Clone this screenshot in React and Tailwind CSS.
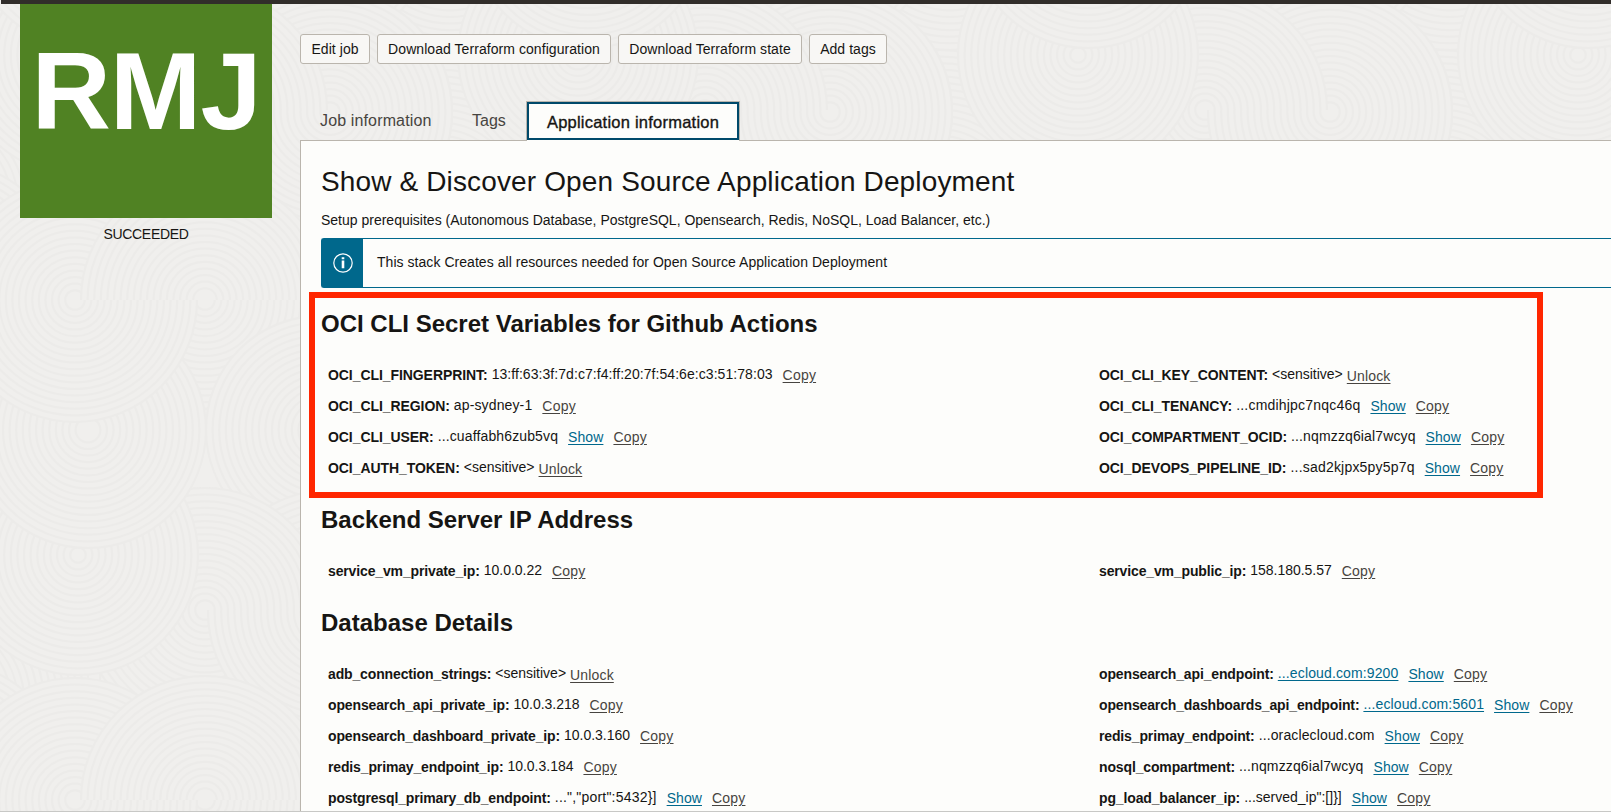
import React from 'react';

const rings = (step, max) => Array.from({ length: Math.floor(max / step) }, (_, i) => max - i * step);

/* Swirls of the repeating 500px tile, painted back to front: x, y, radius, upper half only. */
const discs = [
  [400, 260, 180], [250, 180, 150], [440, 200, 150],
  [205, 300, 122], [330, 112, 122], [205, 110, 122],
  [440, 290, 130], [450, 430, 120], [320, 430, 114], [330, 112, 122],
  [205, 110, 122, true], [78, 55, 120], [88, 430, 118],
  [75, 300, 122], [205, 300, 124, true],
];

const shape = (x, y, r, upper) =>
  upper
    ? `M${x - r} ${y}a${r} ${r} 0 0 1 ${2 * r} 0`
    : `M${x - r} ${y}a${r} ${r} 0 0 1 ${2 * r} 0a${r} ${r} 0 0 1 ${-2 * r} 0`;

function Backdrop() {
  return (
    <svg className="absolute inset-0 h-full w-full" aria-hidden="true">
      <defs>
        <pattern id="swirl" width="500" height="500" patternUnits="userSpaceOnUse">
          {discs.map(([x, y, r, upper], d) =>
            [-500, 0, 500].map((dx) =>
              [-500, 0, 500].map((dy) =>
                rings(6.6, r).map((q) => (
                  <path key={`${d}-${dx}-${dy}-${q}`} d={shape(x + dx, y + dy, q, upper)} fill="#f0efed" stroke="#ecebe9" strokeWidth="2" />
                ))
              )
            )
          )}
        </pattern>
      </defs>
      <rect width="100%" height="100%" fill="#f0efed" />
      <rect width="100%" height="100%" fill="url(#swirl)" />
    </svg>
  );
}

function Button({ children, className }) {
  return (
    <button className={`flex h-[30px] items-center justify-center whitespace-nowrap rounded-[3px] border border-[#bab5ad] bg-[#f8f7f5] text-[14px] tracking-[0.06px] text-[#161513] ${className}`}>
      {children}
    </button>
  );
}

function valueTracking(value) {
  if (/^[\d.]+$/.test(value)) return 'tracking-[-0.02px]';
  if (/^13:/.test(value)) return 'tracking-[0.06px]';
  if (/cmdih|sad2|port/.test(value)) return 'tracking-[0.2px]';
  if (/sensitive|served/.test(value)) return 'tracking-normal';
  return 'tracking-[0.13px]';
}

function Row({ name, value, link, show, unlock }) {
  const upper = name === name.toUpperCase();
  return (
    <div className="flex h-[31px] items-start whitespace-nowrap pt-[5px] text-[14px] leading-[20px]">
      <b className={`mr-1 font-bold ${upper ? 'tracking-[-0.07px]' : 'tracking-[-0.14px]'}`}>{name}:</b>
      <span className={`-mt-px ${valueTracking(value)} ${link ? 'text-[#00688c] underline underline-offset-2' : ''}`}>{value}</span>
      {show && <a className="ml-[10px] tracking-[0.08px] text-[#00688c] underline underline-offset-2">Show</a>}
      {unlock ? (
        <a className="ml-1 mt-px tracking-[0.15px] text-[#474440] underline underline-offset-2">Unlock</a>
      ) : (
        <a className="ml-[10px] tracking-[0.2px] text-[#474440] underline underline-offset-2">Copy</a>
      )}
    </div>
  );
}

function Section({ title, left, right, className }) {
  return (
    <section className={className}>
      <h2 className="h-[32px] text-[24px] font-bold leading-[32px]">{title}</h2>
      <div className="mt-[20px] grid grid-cols-[771px_1fr] pl-[7px]">
        <div>{left.map((r) => <Row key={r.name} {...r} />)}</div>
        <div>{right.map((r) => <Row key={r.name} {...r} />)}</div>
      </div>
    </section>
  );
}

export default function App() {
  return (
    <div className="relative h-[812px] w-[1611px] overflow-hidden bg-[#f0efed] text-[#161513] [font-family:'Liberation_Sans',Arial,sans-serif]">
      <Backdrop />
      <div className="relative flex h-full flex-col">
        <div className="ml-px h-1 shrink-0 bg-[#312d2a]" />
        <div className="flex min-h-0 flex-1">
          <aside className="w-[300px] shrink-0 pl-5">
            <div className="flex h-[214px] w-[252px] justify-center bg-[#508223] pt-[27px] text-[110px] font-bold leading-[120px] tracking-[-1px] text-white">
              RMJ
            </div>
            <div className="mt-[6px] w-[252px] text-center text-[14px] leading-[20px] tracking-[-0.3px]">SUCCEEDED</div>
          </aside>
          <main className="flex min-w-0 flex-1 flex-col">
            <div className="mt-[30px] flex gap-[7px]">
              <Button className="w-[70px]">Edit job</Button>
              <Button className="w-[234px]">Download Terraform configuration</Button>
              <Button className="w-[184px]">Download Terraform state</Button>
              <Button className="w-[78px]">Add tags</Button>
            </div>
            <nav className="relative z-10 -mb-px mt-[37px] flex h-[40px] text-[16px] leading-[20px] text-[#474440]">
              <div className="w-[152px] pl-5 pt-[10px] tracking-[0.14px]">Job information</div>
              <div className="w-[74px] pl-5 pt-[10px]">Tags</div>
              <div className="w-[214px] border border-b-0 border-[#bab5ad] bg-[#fdfdfb]">
                <div className="flex h-[38px] items-center justify-center border-2 border-[#00496a] pt-px text-[16.5px] tracking-[0.23px] text-[#161513] [-webkit-text-stroke:0.35px_#161513]">
                  Application information
                </div>
              </div>
            </nav>
            <div className="min-h-0 flex-1 border-l border-t border-[#bab5ad] bg-[#fdfdfb] pl-5">
              <h1 className="mt-[23px] text-[28px] leading-[36px] tracking-[0.14px]">Show &amp; Discover Open Source Application Deployment</h1>
              <p className="mt-[10px] text-[14px] leading-[20px]">
                Setup prerequisites (Autonomous Database, PostgreSQL, Opensearch, Redis, NoSQL, Load Balancer, etc.)
              </p>
              <div className="mt-[8px] flex h-[50px] rounded-l-[3px] border border-r-0 border-[#00688c]">
                <div className="flex w-[41px] shrink-0 items-center justify-center bg-[#00688c]">
                  <svg width="20" height="20" viewBox="0 0 20 20" fill="none" stroke="#fff">
                    <circle cx="10" cy="10" r="9.2" strokeWidth="1.2" />
                    <path d="M10 7.6v7.6M10 4.2v2" strokeWidth="2.6" />
                  </svg>
                </div>
                <p className="ml-[14px] mt-[13px] text-[14px] leading-[20px] tracking-[0.045px]">
                  This stack Creates all resources needed for Open Source Application Deployment
                </p>
              </div>
              <Section
                className="mt-[20px]"
                title="OCI CLI Secret Variables for Github Actions"
                left={[
                  { name: 'OCI_CLI_FINGERPRINT', value: '13:ff:63:3f:7d:c7:f4:ff:20:7f:54:6e:c3:51:78:03' },
                  { name: 'OCI_CLI_REGION', value: 'ap-sydney-1' },
                  { name: 'OCI_CLI_USER', value: '...cuaffabh6zub5vq', show: true },
                  { name: 'OCI_AUTH_TOKEN', value: '<sensitive>', unlock: true },
                ]}
                right={[
                  { name: 'OCI_CLI_KEY_CONTENT', value: '<sensitive>', unlock: true },
                  { name: 'OCI_CLI_TENANCY', value: '...cmdihjpc7nqc46q', show: true },
                  { name: 'OCI_COMPARTMENT_OCID', value: '...nqmzzq6ial7wcyq', show: true },
                  { name: 'OCI_DEVOPS_PIPELINE_ID', value: '...sad2kjpx5py5p7q', show: true },
                ]}
              />
              <Section
                className="mt-[20px]"
                title="Backend Server IP Address"
                left={[{ name: 'service_vm_private_ip', value: '10.0.0.22' }]}
                right={[{ name: 'service_vm_public_ip', value: '158.180.5.57' }]}
              />
              <Section
                className="mt-[20px]"
                title="Database Details"
                left={[
                  { name: 'adb_connection_strings', value: '<sensitive>', unlock: true },
                  { name: 'opensearch_api_private_ip', value: '10.0.3.218' },
                  { name: 'opensearch_dashboard_private_ip', value: '10.0.3.160' },
                  { name: 'redis_primay_endpoint_ip', value: '10.0.3.184' },
                  { name: 'postgresql_primary_db_endpoint', value: '...","port":5432}]', show: true },
                ]}
                right={[
                  { name: 'opensearch_api_endpoint', value: '...ecloud.com:9200', show: true, link: true },
                  { name: 'opensearch_dashboards_api_endpoint', value: '...ecloud.com:5601', show: true, link: true },
                  { name: 'redis_primay_endpoint', value: '...oraclecloud.com', show: true },
                  { name: 'nosql_compartment', value: '...nqmzzq6ial7wcyq', show: true },
                  { name: 'pg_load_balancer_ip', value: '...served_ip":[]}]', show: true },
                ]}
              />
            </div>
          </main>
        </div>
      </div>
      <div className="absolute left-[309px] top-[292px] h-[206px] w-[1234px] border-[6px] border-[#ff2600]" />
      <div className="absolute bottom-0 left-0 h-px w-full bg-[#c8c8c6]" />
    </div>
  );
}
